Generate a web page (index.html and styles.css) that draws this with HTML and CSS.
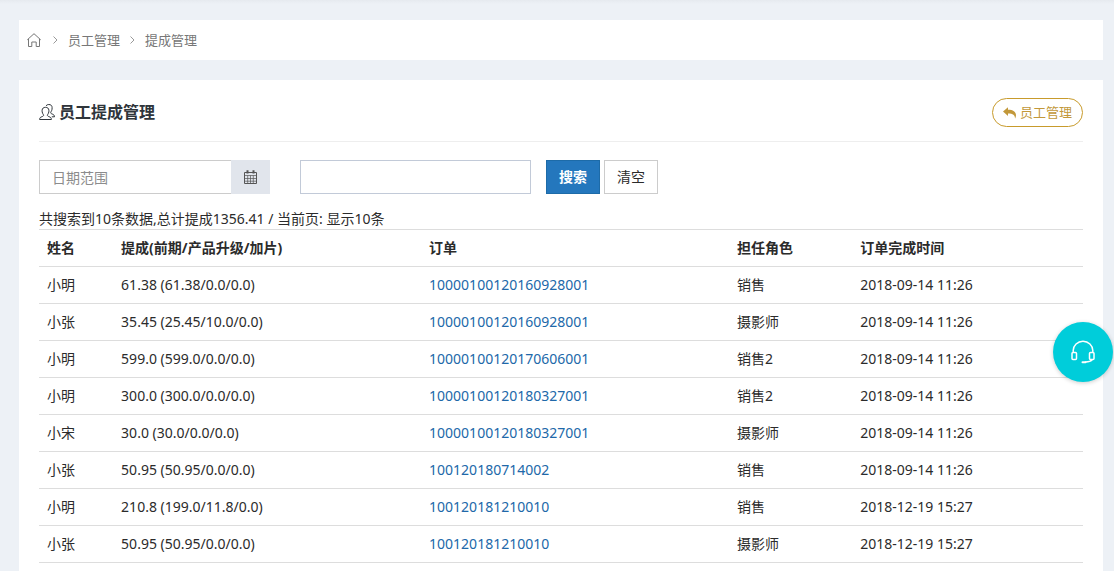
FILE: index.html
```html
<!DOCTYPE html>
<html lang="zh-CN">
<head>
  <meta charset="UTF-8" />
  <meta name="viewport" content="width=device-width, initial-scale=1.0"/>
  <title>员工提成管理</title>
  <link rel="stylesheet" href="styles.css">
</head>
<body>
  <nav class="breadcrumb">
    <a href="#" class="home" aria-label="首页">
      <svg width="14" height="14" viewBox="0 0 14 14" fill="none" stroke="currentColor"><path d="M.3 6.8 7 .7l6.7 6.1M1.5 6v7.5h3.3V9h4.4v4.5h3.3V6"/></svg>
    </a>
    <svg class="sep" width="5" height="8" viewBox="0 0 5 8" fill="none" stroke="currentColor"><path d="M.5.5 4 4 .5 7.5"/></svg>
    <a href="#">员工管理</a>
    <svg class="sep" width="5" height="8" viewBox="0 0 5 8" fill="none" stroke="currentColor"><path d="M.5.5 4 4 .5 7.5"/></svg>
    <a href="#">提成管理</a>
  </nav>

  <main class="portlet">
    <div class="portlet-title">
      <h1>
        <svg width="16" height="17" viewBox="0 0 16 17" fill="none" stroke="currentColor" stroke-linejoin="round"><path d="M.6 15.5h11.8c0-1.7-.9-2.3-2.3-2.8-1-.4-1.7-.7-1.7-1.5 0-.6.7-1.1 1-1.9.4-.9.6-1.9.5-3C9.800 4.400 8.500 3.300 6.500 3.300S3.200 4.400 3.100 6.300c-.1 1.100.1 2.100.5 3 .3.800 1 1.300 1 1.900 0 .8-.7 1.100-1.700 1.500-1.400.5-2.300 1.100-2.300 2.800zM7 1.800C7.700.9 8.600.5 9.800.5c2.100 0 3.300 1.200 3.300 3.100.1 1.200-.1 2.200-.5 3.100-.3.800-.9 1.300-.9 1.900 0 .8.600 1.100 1.500 1.400 1.500.6 2.300 1.300 2.300 2.800h-2.700"/></svg>
        员工提成管理
      </h1>
      <a href="#" class="btn-back">
        <svg width="13" height="12" viewBox="0 0 13 12" fill="currentColor"><path d="M0 4.500 5 .3v2.400c5 0 8 2 8 5.600 0 1.300-.4 2.400-1 3.400.2-3.300-2-5.100-7-5.100v2.300z"/></svg>
        员工管理
      </a>
    </div>

    <form class="search">
      <div class="date-group">
        <input type="text" class="date" placeholder="日期范围" aria-label="日期范围">
        <button type="button" class="btn-date" aria-label="选择日期">
          <svg width="14" height="14" viewBox="0 0 14 14" fill="none" stroke="currentColor"><path d="M.5 2.500h12v11H.5z"/><path d="M1 5.500h11M1 8.500h11M1 11.200h11M3.700 5.500v8M6.500 5.500v8M9.300 5.500v8" stroke-width=".7"/><path d="M3.500.3v3.200M9.500.3v3.200" stroke-width="2"/></svg>
        </button>
      </div>
      <input type="text" class="keyword" aria-label="关键字">
      <div class="actions">
        <button type="button" class="btn btn-search">搜索</button>
        <button type="reset" class="btn">清空</button>
      </div>
    </form>

    <div class="summary">共搜索到10条数据,总计提成1356.41 / 当前页: 显示10条</div>

    <table class="table">
      <thead>
        <tr><th class="col-name">姓名</th><th class="col-wide">提成(前期/产品升级/加片)</th><th class="col-wide">订单</th><th class="col-role">担任角色</th><th>订单完成时间</th></tr>
      </thead>
      <tbody>
        <tr><td>小明</td><td>61.38 (61.38/0.0/0.0)</td><td><a href="#">10000100120160928001</a></td><td>销售</td><td>2018-09-14 11:26</td></tr>
        <tr><td>小张</td><td>35.45 (25.45/10.0/0.0)</td><td><a href="#">10000100120160928001</a></td><td>摄影师</td><td>2018-09-14 11:26</td></tr>
        <tr><td>小明</td><td>599.0 (599.0/0.0/0.0)</td><td><a href="#">10000100120170606001</a></td><td>销售2</td><td>2018-09-14 11:26</td></tr>
        <tr><td>小明</td><td>300.0 (300.0/0.0/0.0)</td><td><a href="#">10000100120180327001</a></td><td>销售2</td><td>2018-09-14 11:26</td></tr>
        <tr><td>小宋</td><td>30.0 (30.0/0.0/0.0)</td><td><a href="#">10000100120180327001</a></td><td>摄影师</td><td>2018-09-14 11:26</td></tr>
        <tr><td>小张</td><td>50.95 (50.95/0.0/0.0)</td><td><a href="#">100120180714002</a></td><td>销售</td><td>2018-09-14 11:26</td></tr>
        <tr><td>小明</td><td>210.8 (199.0/11.8/0.0)</td><td><a href="#">100120181210010</a></td><td>销售</td><td>2018-12-19 15:27</td></tr>
        <tr><td>小张</td><td>50.95 (50.95/0.0/0.0)</td><td><a href="#">100120181210010</a></td><td>摄影师</td><td>2018-12-19 15:27</td></tr>
      </tbody>
    </table>
  </main>

  <button type="button" class="service" aria-label="在线客服">
    <svg width="24" height="24" viewBox="0 0 24 24" fill="none" stroke="currentColor" stroke-width="1.5" stroke-linecap="round" stroke-linejoin="round"><path d="M2.200 12v-1.500a9.800 9.300 0 0 1 19.600 0V12M2 12.500h2.500a1 1 0 0 1 1 1v5a1 1 0 0 1-1 1H2a1 1 0 0 1-1-1v-5a1 1 0 0 1 1-1zM22 12.500h-2.500a1 1 0 0 0-1 1v5a1 1 0 0 0 1 1H22a1 1 0 0 0 1-1v-5a1 1 0 0 0-1-1zM21.500 19.500c-1.500 1.700-4 2.500-7 2.600"/><path d="M11.500 22.300h3" stroke-width="2"/></svg>
  </button>
</body>
</html>
```
FILE: styles.css
```css
* {
  box-sizing: border-box;
}
body {
  margin: 0;
  min-height: 100vh;
  padding: 20px 11px 0 19px;
  display: flex;
  flex-direction: column;
  gap: 20px;
  background: linear-gradient(#e6eaef, #edf1f6 4px);
  color: #2b2b2b;
  font-family: "Noto Sans", "Noto Sans CJK SC", sans-serif;
  font-size: 14px;
  line-height: 20px;
}
a {
  color: #2168a9;
  text-decoration: none;
}
input, button {
  font: inherit;
  color: inherit;
}
.breadcrumb {
  display: flex;
  align-items: center;
  gap: 10px;
  height: 40px;
  padding: 0 8px;
  background: #fff;
  font-size: 13px;
}
.breadcrumb a {
  color: #777;
}
.breadcrumb .home {
  display: flex;
  margin-right: 2px;
}
.sep {
  color: #999;
}
.portlet {
  flex: 1;
  padding: 12px 20px 8px;
  background: #fff;
}
.portlet-title {
  display: flex;
  justify-content: space-between;
  align-items: flex-start;
  height: 50px;
  padding-top: 6px;
  margin-bottom: 18px;
  border-bottom: 1px solid #eee;
}
h1 {
  display: flex;
  align-items: center;
  gap: 4px;
  margin: 4px 0 0;
  color: #2f353b;
  font-size: 16px;
}
.btn-back {
  display: flex;
  align-items: center;
  gap: 4px;
  padding: 4px 10px;
  border: 1px solid #c89b2c;
  border-radius: 15px;
  color: #c2983a;
  font-size: 13px;
  line-height: 19px;
}
.search {
  display: flex;
}
.date-group {
  display: flex;
  width: 231px;
  margin-right: 30px;
}
.date, .keyword {
  min-width: 0;
  height: 34px;
  padding: 6px 12px;
  border: 1px solid #c2cad8;
  background: #fff;
}
.date {
  flex: 1;
  border-color: #ccc;
  border-right: 0;
}
.date::placeholder {
  color: #8c8c8c;
}
.btn-date {
  width: 39px;
  padding: 0;
  border: 0;
  background: #e1e5ec;
  color: #555;
}
.btn-date svg {
  display: block;
  margin: auto;
}
.keyword {
  width: 231px;
  margin-right: 15px;
}
.actions {
  display: flex;
  gap: 4px;
}
.btn {
  height: 34px;
  padding: 6px 12px;
  border: 1px solid #ccc;
  background: #fff;
}
.btn-search {
  border-color: #1d6ba8;
  background: #2477bd;
  color: #fff;
  font-weight: bold;
}
.summary {
  margin-top: 15px;
}
.table {
  width: 100%;
  table-layout: fixed;
  border-collapse: collapse;
}
.table th, .table td {
  height: 37px;
  padding: 8px;
  border-top: 1px solid #ddd;
  text-align: left;
}
.table tbody tr:last-child td {
  border-bottom: 1px solid #ddd;
}
.col-name {
  width: 7.1%;
}
.col-wide {
  width: 29.5%;
}
.col-role {
  width: 11.8%;
}
.service {
  position: fixed;
  right: 1px;
  top: 322px;
  display: flex;
  align-items: center;
  justify-content: center;
  width: 60px;
  height: 60px;
  padding: 0;
  border: 0;
  border-radius: 50%;
  background: #00cdda;
  color: #fff;
  box-shadow: 0 1px 4px rgba(0,0,0,0.2);
}
```
